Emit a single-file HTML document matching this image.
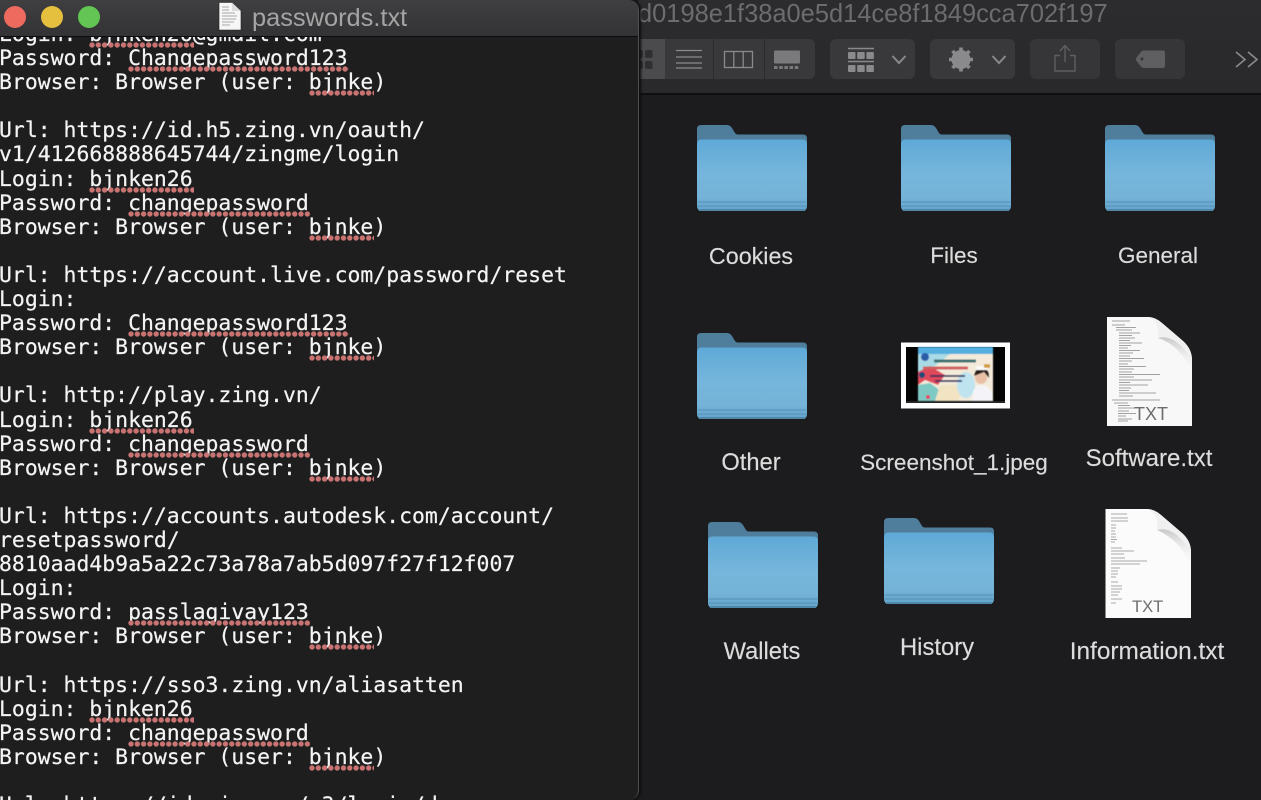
<!DOCTYPE html>
<html><head><meta charset="utf-8"><title>passwords.txt</title>
<style>
html,body{margin:0;padding:0;background:#1c1c1e}
body{width:1261px;height:800px;position:relative;overflow:hidden;font-family:"Liberation Sans",sans-serif}
.abs{position:absolute}
#finder{left:638px;top:0;width:623px;height:800px;background:#1c1c1e}
#fbar{left:0;top:0;width:623px;height:93px;background:linear-gradient(#2c2c2e,#29292b);border-bottom:2px solid #0f0f10}
#ftitle{left:0;top:0;font-size:25.45px;line-height:29px;color:#6c6c6e;white-space:nowrap}
.lbl{position:absolute;transform:translateX(-50%);font-size:22.5px;line-height:26px;color:#dcdcdc;white-space:nowrap;-webkit-text-stroke:.15px #dcdcdc}
#win{left:0;top:0;width:638px;height:800px;background:#1e1e1e;border-right:1px solid #505052;border-radius:0 10px 10px 0;overflow:hidden;box-shadow:2px 0 2px #0d0d0e}
#tbar{left:0;top:0;width:638px;height:36px;background:linear-gradient(#3f3f41,#333335);border-bottom:1px solid #0c0c0c;z-index:2}
.dot{position:absolute;top:6px;width:22px;height:22px;border-radius:50%}
#ttl{left:252px;top:4px;font-size:25.4px;line-height:28px;color:#a4a4a4;white-space:nowrap}
pre{position:absolute;left:-1px;top:23px;margin:0;font-family:"DejaVu Sans Mono","Liberation Mono",monospace;font-size:21.45px;line-height:24.1px;color:#f4f4f4;font-weight:400;-webkit-text-stroke:.2px #f4f4f4}
pre span{position:relative;display:inline-block;line-height:24.1px}
pre span::after{content:"";position:absolute;left:0;right:-1px;bottom:-1px;height:6px;background:radial-gradient(circle at 3px 3px,#c97472 2.4px,transparent 2.9px) 0 0/6.3px 6px repeat-x}
</style></head><body>
<svg width="0" height="0" style="position:absolute"><defs>
<linearGradient id="fg" x1="0" y1="0" x2="0" y2="1"><stop offset="0" stop-color="#5fa9d7"/><stop offset=".5" stop-color="#76b6dc"/><stop offset=".8" stop-color="#75b3d8"/><stop offset="1" stop-color="#64a5cc"/></linearGradient>
<symbol id="folder" viewBox="0 0 110 86">
<path d="M0 4Q0 0 4 0H30Q33 0 35 3L38 8Q39 9.500 41 9.500H106Q110 9.500 110 13.500V40H0Z" fill="#4f7d9c"/>
<path d="M0 19Q0 14.500 4.500 14.500H105.500Q110 14.500 110 19V81Q110 86 105 86H5Q0 86 0 81Z" fill="url(#fg)"/>
<path d="M.500 77H109.500M.500 81H109.500" stroke="#5590b4" stroke-width="1"/>
<path d="M2 85H108" stroke="#4e87aa" stroke-width="2"/>
</symbol>
</defs></svg>

<div id="finder" class="abs">
 <div id="fbar" class="abs"></div>
 <div id="ftitle" class="abs">d0198e1f38a0e5d14ce8f1849cca702f197</div>
</div>

<svg class="abs" style="left:0;top:0" width="1261" height="800" viewBox="0 0 1261 800">
 <!-- toolbar -->
 <rect x="630" y="39" width="185" height="40" rx="6" fill="#39393b"/>
 <rect x="630" y="39" width="35" height="40" fill="#4b4b4d"/>
 <path d="M713.500 39V79M764.500 39V79" stroke="#2b2b2d"/>
 <g fill="#2f2f31"><rect x="635" y="50" width="8" height="8" rx="2"/><rect x="635" y="61" width="8" height="8" rx="2"/><rect x="645" y="50" width="7.500" height="8" rx="2"/><rect x="645" y="61" width="7.500" height="8" rx="2"/></g>
 <path d="M676 50.500H702M676 57H702M676 63H702M676 68H702" stroke="#8a8a8c" stroke-width="1.300"/>
 <rect x="724.500" y="51.500" width="28" height="16" fill="none" stroke="#8a8a8c" stroke-width="1.300"/>
 <path d="M733.800 51V68M743.200 51V68" stroke="#8a8a8c" stroke-width="1.300"/>
 <rect x="774" y="50.500" width="26" height="13" rx="1" fill="#7a7a7c"/>
 <path d="M774 67.500H800" stroke="#7a7a7c" stroke-width="3" stroke-dasharray="3.500 1.700"/>
 <rect x="830" y="39" width="85" height="40" rx="6" fill="#39393b"/>
 <path d="M848 48.500H874M848 61.500H874" stroke="#8a8a8c" stroke-width="1.500"/>
 <g fill="#8a8a8c"><rect x="848" y="52" width="7.500" height="7" rx="1"/><rect x="857.200" y="52" width="7.500" height="7" rx="1"/><rect x="866.400" y="52" width="7.500" height="7" rx="1"/><rect x="848" y="65" width="7.500" height="7" rx="1"/><rect x="857.200" y="65" width="7.500" height="7" rx="1"/><rect x="866.400" y="65" width="7.500" height="7" rx="1"/></g>
 <path d="M892.500 56L899 63L905.500 56" fill="none" stroke="#8a8a8c" stroke-width="2"/>
 <rect x="930" y="39" width="85" height="40" rx="6" fill="#39393b"/>
 <circle cx="961" cy="59.500" r="7" fill="none" stroke="#8a8a8c" stroke-width="5"/>
 <path d="M961 47.500V71.500M949 59.500H973M952.500 51L969.500 68M969.500 51L952.500 68" stroke="#8a8a8c" stroke-width="3.600"/>
 <path d="M992.500 56L999 63L1005.500 56" fill="none" stroke="#8a8a8c" stroke-width="2"/>
 <rect x="1030" y="39" width="70" height="40" rx="6" fill="#363638"/>
 <path d="M1060 55.500H1055V71H1075V55.500H1070M1065 62V46M1060 51L1065 45.500L1070 51" fill="none" stroke="#5f5f61" stroke-width="1.400"/>
 <rect x="1115" y="39" width="70" height="40" rx="6" fill="#363638"/>
 <path d="M1136.500 57.500L1141 52Q1142 50.500 1144 50.500H1163Q1165 50.500 1165 52.500V66Q1165 68 1163 68H1144Q1142 68 1141 66.500L1136.500 61Q1135.500 59.500 1136.500 57.500Z" fill="#5f5f61"/>
 <circle cx="1142" cy="59" r="1.500" fill="#363638"/>
 <path d="M1236 52L1245 59.500L1236 67M1248 52L1257 59.500L1248 67" fill="none" stroke="#8a8a8c" stroke-width="1.600"/>

 <!-- folders -->
 <use href="#folder" x="697" y="125" width="110" height="86"/>
 <use href="#folder" x="901" y="125" width="110" height="86"/>
 <use href="#folder" x="1105" y="125" width="110" height="86"/>
 <use href="#folder" x="697" y="333" width="110" height="86"/>
 <use href="#folder" x="708" y="522" width="110" height="86"/>
 <use href="#folder" x="884" y="518" width="110" height="86"/>

 <!-- screenshot thumbnail -->
 <defs><filter id="bl" x="-5%" y="-5%" width="110%" height="110%"><feGaussianBlur stdDeviation=".55"/></filter></defs>
 <rect x="901" y="342.500" width="109" height="66" fill="#fff"/>
 <rect x="906" y="347" width="99" height="56" fill="#050505"/>
 <g filter="url(#bl)">
 <rect x="918" y="347" width="75" height="54" fill="#f3ead9"/>
 <rect x="918" y="347" width="75" height="7" fill="#55aee0"/>
 <path d="M918 354H950L935 366L918 372Z" fill="#a8dbe6"/>
 <path d="M918 372L930 366L945 375L938 385L925 380L918 385Z" fill="#e0485a"/>
 <path d="M918 385L930 383L942 392L935 401H918Z" fill="#7ec9c4"/>
 <path d="M940 385H963L958 401H935Z" fill="#f2e3c2"/>
 <circle cx="922" cy="375" r="3" fill="#1c4c78"/><circle cx="928" cy="397" r="2" fill="#e0485a"/>
 <ellipse cx="966" cy="385" rx="9" ry="13" fill="#bfe3ef"/>
 <path d="M972 401Q972 385 981 385Q992 385 993 401Z" fill="#f4f4f8"/>
 <circle cx="981" cy="378" r="6" fill="#e8c0a6"/>
 <path d="M974 376Q975 368 982 368Q990 369 989 378L984 372Z" fill="#2a1d18"/>
 <rect x="976" y="366" width="12" height="4" rx="1" fill="#fafafa"/>
 <circle cx="925" cy="357" r="4" fill="#2c5ca8"/>
 <path d="M934 361H976" stroke="#3a6f72" stroke-width="3"/>
 <path d="M923 368H968" stroke="#d05f5f" stroke-width="3"/>
 <path d="M984 366H990" stroke="#d09a3a" stroke-width="3.500"/>
 <path d="M930 376H965M935 381H962" stroke="#303060" stroke-width="1.800"/>
 </g>
 <path d="M906 402H1005" stroke="#444" stroke-width="1"/>

 <!-- Software.txt document -->
 <path d="M1107 317H1148Q1155 317 1162 323L1183 341Q1192 349 1192 360V426H1107Z" fill="#f8f8f8"/>
 <defs>
 <linearGradient id="sh" x1="0" y1="0" x2="0" y2="1"><stop offset="0" stop-color="#c8c8c8"/><stop offset="1" stop-color="#f8f8f8" stop-opacity="0"/></linearGradient></defs>
 <path d="M1162 323Q1155 317 1148 317Q1160 322 1158 338Q1175 333 1192 360Q1192 349 1183 341Z" fill="#f0f0f0"/>
 <path d="M1158 338Q1175 333 1192 360V372Q1180 345 1158 338Z" fill="url(#sh)"/>
 <path d="M1112 321H1130M1112 325H1125M1116 327.500H1136M1116 330H1132M1119 333H1140M1119 335.500H1132M1119 338H1135M1119 340.500H1130M1119 343H1142M1119 345.500H1131M1119 348H1128M1119 350.500H1140M1119 353H1133M1119 356H1130M1119 358.500H1144M1119 361H1132M1119 364H1128M1119 366.500H1146M1119 369H1134M1119 372H1132M1119 374.500H1160M1119 377H1134M1119 380H1152M1119 382.500H1130M1119 385H1148M1119 388H1131M1119 390.500H1129M1119 393H1156M1119 396H1133M1112 400H1160M1114 403H1128M1118 405.500H1130M1118 408H1135M1118 411H1129M1118 413.500H1136M1118 416H1126M1118 419H1132M1118 421H1128" stroke="#a2a2a2" stroke-width="1" fill="none"/>
 <text x="1134" y="420" font-family="Liberation Sans" font-size="18" fill="#6d6d6d">TXT</text>

 <!-- Information.txt document -->
 <path d="M1105.500 509H1147Q1154 509 1161 515L1182 533Q1191 541 1191 552V618H1105.500Z" fill="#fbfbfb"/>
 <path d="M1161 515Q1154 509 1147 509Q1159 514 1157 530Q1174 525 1191 552Q1191 541 1182 533Z" fill="#f0f0f0"/>
 <path d="M1157 530Q1174 525 1191 552V566Q1180 540 1157 530Z" fill="url(#sh)"/>
 <path d="M1111 514H1127M1111 518H1128M1111 521H1128M1111 525H1116M1111 528H1116M1111 531H1115M1111 534H1116M1111 537H1116M1111 539.500H1117M1111 542H1115M1111 548H1122M1111 551H1134M1111 554H1124M1111 558H1125M1111 561H1147M1111 564H1140M1111 568H1120M1111 571H1118M1111 574H1118M1111 577H1116M1111 582H1118M1111 586H1122M1111 589H1122M1111 592H1120M1111 595H1118M1111 599H1122M1111 603H1116" stroke="#a8a8a8" stroke-width=".9" fill="none"/>
 <text x="1132" y="612" font-family="Liberation Sans" font-size="16.500" fill="#6d6d6d">TXT</text>
</svg>

<div class="lbl" style="left:751px;top:243px;font-size:23.3px">Cookies</div>
<div class="lbl" style="left:954px;top:243px">Files</div>
<div class="lbl" style="left:1158px;top:243px">General</div>
<div class="lbl" style="left:751px;top:450px;font-size:23.7px">Other</div>
<div class="lbl" style="left:954px;top:450px">Screenshot_1.jpeg</div>
<div class="lbl" style="left:1149px;top:446px;font-size:24px">Software.txt</div>
<div class="lbl" style="left:762px;top:639px;font-size:23.7px">Wallets</div>
<div class="lbl" style="left:937px;top:635px;font-size:23.8px">History</div>
<div class="lbl" style="left:1147px;top:639px;font-size:24.4px">Information.txt</div>

<div id="win" class="abs">
 <div id="tbar" class="abs">
  <div class="dot" style="left:4px;background:#ee6a5f"></div>
  <div class="dot" style="left:41px;background:#e5bf3e"></div>
  <div class="dot" style="left:78px;background:#62c554"></div>
  <svg class="abs" style="left:218px;top:2px" width="24" height="29" viewBox="0 0 24 29">
   <path d="M1 .500H14L23 9V28H1Z" fill="#f6f6f6" stroke="#222" stroke-width=".6"/>
   <path d="M14 .500V9H23Z" fill="#dcdcdc"/>
   <path d="M4 5H11M4 8H11M4 11H17M4 14H19M4 17H18M4 20H16M4 23H12" stroke="#a8a8a8" stroke-width="1"/>
  </svg>
  <div id="ttl" class="abs">passwords.txt</div>
 </div>
<pre>Login: <span>bjnken26</span>@gmail.com
Password: <span>Changepassword123</span>
Browser: Browser (user: <span>bjnke</span>)

Url: https://id.h5.zing.vn/oauth/
v1/412668888645744/zingme/login
Login: <span>bjnken26</span>
Password: <span>changepassword</span>
Browser: Browser (user: <span>bjnke</span>)

Url: https://account.live.com/password/reset
Login:
Password: <span>Changepassword123</span>
Browser: Browser (user: <span>bjnke</span>)

Url: http://play.zing.vn/
Login: <span>bjnken26</span>
Password: <span>changepassword</span>
Browser: Browser (user: <span>bjnke</span>)

Url: https://accounts.autodesk.com/account/
resetpassword/
8810aad4b9a5a22c73a78a7ab5d097f27f12f007
Login:
Password: <span>passlagivay123</span>
Browser: Browser (user: <span>bjnke</span>)

Url: https://sso3.zing.vn/aliasatten
Login: <span>bjnken26</span>
Password: <span>changepassword</span>
Browser: Browser (user: <span>bjnke</span>)

Url: https://id.zing.vn/v3/login/d</pre>
</div>
</body></html>
